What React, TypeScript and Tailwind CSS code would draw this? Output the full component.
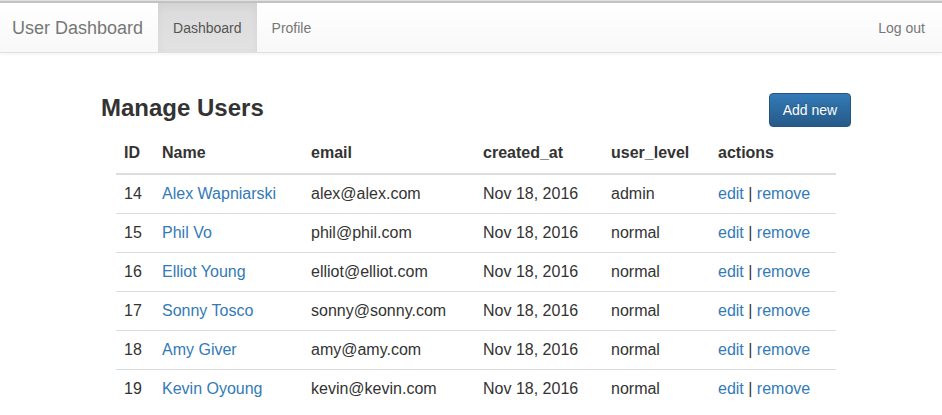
import React from 'react';

const users = [
  { id: 14, name: 'Alex Wapniarski', email: 'alex@alex.com', created: 'Nov 18, 2016', level: 'admin' },
  { id: 15, name: 'Phil Vo', email: 'phil@phil.com', created: 'Nov 18, 2016', level: 'normal' },
  { id: 16, name: 'Elliot Young', email: 'elliot@elliot.com', created: 'Nov 18, 2016', level: 'normal' },
  { id: 17, name: 'Sonny Tosco', email: 'sonny@sonny.com', created: 'Nov 18, 2016', level: 'normal' },
  { id: 18, name: 'Amy Giver', email: 'amy@amy.com', created: 'Nov 18, 2016', level: 'normal' },
  { id: 19, name: 'Kevin Oyoung', email: 'kevin@kevin.com', created: 'Nov 18, 2016', level: 'normal' },
];

const App = () => {
  return (
    <div className="min-h-screen bg-white text-[#333] font-['Liberation_Sans',Arial,sans-serif]">
      <div className="h-[1px] bg-[#e0e0e0]" />
      <div className="h-[2px] bg-[#c4c4c4]" />
      <nav className="flex h-[50px] items-stretch bg-gradient-to-b from-white to-[#f8f8f8] border-b border-[#e0e0e0] shadow-[0_1px_4px_rgba(0,0,0,0.06)]">
        <a className="flex items-center pl-[12px] pr-[15px] pt-[1px] text-[18px] text-[#777]">User Dashboard</a>
        <a className="flex items-center px-[15px] pt-[2px] text-[14px] text-[#555] bg-gradient-to-b from-[#dbdbdb] to-[#e2e2e2] shadow-[inset_0_3px_9px_rgba(0,0,0,0.05)]">
          Dashboard
        </a>
        <a className="flex items-center px-[15px] pt-[2px] text-[14px] text-[#777]">Profile</a>
        <div className="flex-1" />
        <a className="flex items-center pl-[15px] pr-[17px] pt-[2px] text-[14px] text-[#777]">Log out</a>
      </nav>

      <div className="ml-[101px] w-[750px]">
        <div className="flex items-start justify-between pt-[40px]">
          <h2 className="text-[24px] font-bold leading-[26px] text-[#333] pt-[2px]">Manage Users</h2>
          <button className="h-[34px] w-[82px] rounded-[4px] border border-[#245580] bg-gradient-to-b from-[#337ab7] to-[#265a88] text-[14px] text-white [text-shadow:0_-1px_0_rgba(0,0,0,0.2)]">
            Add new
          </button>
        </div>

        <div className="px-[15px] mt-[12px]">
          <table className="w-[720px] border-collapse text-[16px] leading-[22px]">
            <colgroup>
              <col className="w-[38px]" />
              <col className="w-[149px]" />
              <col className="w-[172px]" />
              <col className="w-[128px]" />
              <col className="w-[107px]" />
              <col className="w-[126px]" />
            </colgroup>
            <thead>
              <tr className="border-b-2 border-[#ddd] text-left">
                <th className="px-[8px] pt-[3px] pb-[9px] font-bold">ID</th>
                <th className="px-[8px] pt-[3px] pb-[9px] font-bold">Name</th>
                <th className="px-[8px] pt-[3px] pb-[9px] font-bold">email</th>
                <th className="px-[8px] pt-[3px] pb-[9px] font-bold">created_at</th>
                <th className="px-[8px] pt-[3px] pb-[9px] font-bold">user_level</th>
                <th className="px-[8px] pt-[3px] pb-[9px] font-bold">actions</th>
              </tr>
            </thead>
            <tbody>
              {users.map((u, i) => (
                <tr key={u.id} className={i < users.length - 1 ? 'border-b border-[#ddd] h-[39px]' : 'h-[39px]'}>
                  <td className="px-[8px] py-[8px]">{u.id}</td>
                  <td className="px-[8px] py-[8px]">
                    <a className="text-[#337ab7]">{u.name}</a>
                  </td>
                  <td className="px-[8px] py-[8px]">{u.email}</td>
                  <td className="px-[8px] py-[8px]">{u.created}</td>
                  <td className="px-[8px] py-[8px]">{u.level}</td>
                  <td className="px-[8px] py-[8px] whitespace-nowrap">
                    <a className="text-[#337ab7]">edit</a> | <a className="text-[#337ab7]">remove</a>
                  </td>
                </tr>
              ))}
            </tbody>
          </table>
        </div>
      </div>
    </div>
  );
};

export default App;
